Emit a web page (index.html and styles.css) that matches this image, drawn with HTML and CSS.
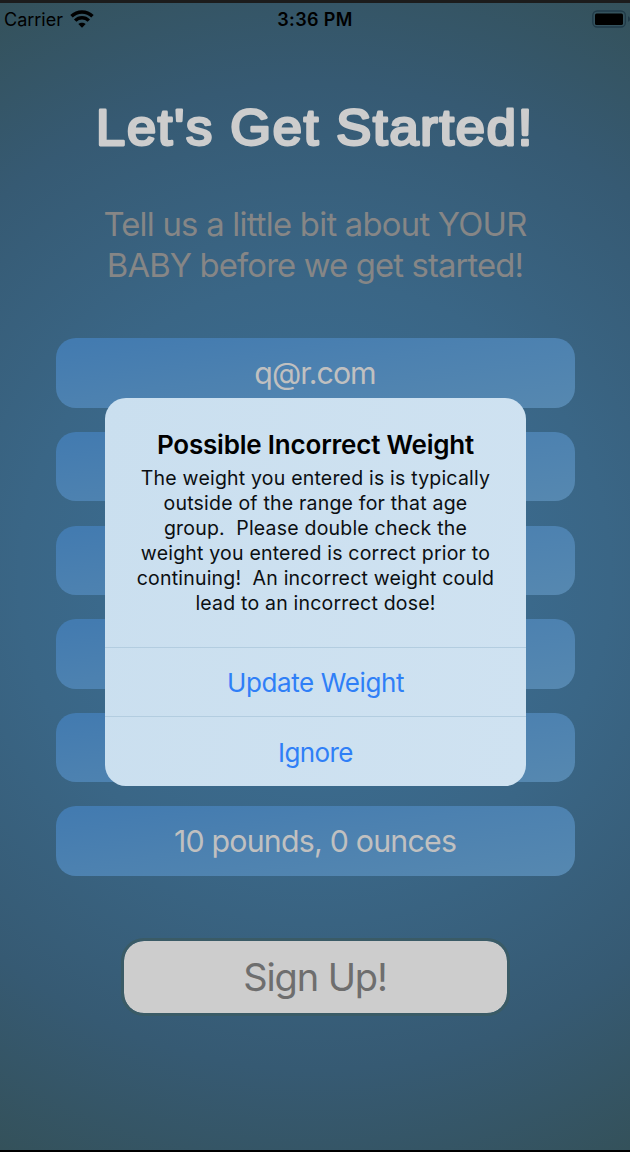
FILE: index.html
```html
<!DOCTYPE html>
<html lang="en">
<head>
<meta charset="utf-8">
<title>Let's Get Started!</title>
<link rel="stylesheet" href="styles.css">
</head>
<body>
<div class="screen">
  <header class="status">
    <div class="status-left">
      <span class="carrier">Carrier</span>
      <svg class="wifi" width="24" height="18" viewBox="0 0 24 18" fill="none" stroke="#000" stroke-width="3.4">
        <path d="M1.5 6.3C7.3.5 16.7.5 22.500 6.3"/>
        <path d="M5.2 10.6c3.8-3.9 9.8-3.9 13.6 0"/>
        <path d="M12 17.8 8.3 14.100c2.1-1.9 5.3-1.9 7.4 0z" fill="#000" stroke="none"/>
      </svg>
    </div>
    <span class="time">3:36 PM</span>
    <svg class="battery" width="38" height="18" viewBox="0 0 38 18">
      <rect x="0.800" y="1" width="32.600" height="16" rx="4.500" fill="none" stroke="#213b49" stroke-width="1.3"/>
      <rect x="3" y="3.600" width="28" height="11.400" rx="1.6" fill="#000"/>
      <path d="M36 6.2c1.300.5 2 1.500 2 2.800s-.7 2.300-2 2.800z" fill="#213b49"/>
    </svg>
  </header>
  <main class="content">
    <h1 class="heading">
      <svg width="460" height="60" viewBox="0 0 460 60">
        <text class="heading-text" x="11" y="47.500" textLength="438" lengthAdjust="spacingAndGlyphs">Let's Get Started!</text>
      </svg>
    </h1>
    <p class="subtitle"><span class="sub-a">Tell us a little bit about YOUR</span><br><span class="sub-b">BABY before we get started!</span></p>
    <div class="fields">
      <div class="field email">q@r.com</div>
      <div class="field"></div>
      <div class="field"></div>
      <div class="field"></div>
      <div class="field"></div>
      <div class="field weight">10 pounds, 0 ounces</div>
    </div>
    <button class="signup">Sign Up!</button>
  </main>
  <div class="alert" role="alertdialog">
    <div class="alert-text">
      <h2 class="alert-title">Possible Incorrect Weight</h2>
      <p class="alert-body">The weight you entered is is typically
outside of the range for that age
group.  Please double check the
weight you entered is correct prior to
continuing!  An incorrect weight could
lead to an incorrect dose!</p>
    </div>
    <button class="action update">Update Weight</button>
    <button class="action ignore">Ignore</button>
  </div>
</div>
</body>
</html>
```
FILE: styles.css
```css
* { box-sizing: border-box; }

body {
  margin: 0;
  background: #000;
  font-family: Inter, "Liberation Sans", sans-serif;
}

button {
  font-family: inherit;
  padding: 0;
}

.screen {
  position: relative;
  height: 1152px;
  border-top: 3px solid #1c1c1c;
  border-bottom: 2px solid #000;
  background: radial-gradient(circle 657px at 315px 574px, #3c7199 0%, #3a6686 45%, #365a73 75%, #34515a 100%);
  overflow: hidden;
}

.status {
  display: grid;
  grid-template-columns: 1fr auto 1fr;
  align-items: center;
  height: 32px;
  padding-left: 4px;
  color: #000;
}

.status-left {
  display: flex;
  align-items: center;
  gap: 7px;
}

.carrier { font-size: 18px; }
.wifi { margin-top: -1px; }
.time { margin-left: -4px; font-size: 18px; font-weight: 600; letter-spacing: 0.4px; }
.battery { justify-self: end; }

.content {
  display: flex;
  flex-direction: column;
  align-items: center;
}

.heading {
  height: 60px;
  margin: 62px 0 0;
}

.heading svg { display: block; }

.heading-text {
  font: 400 50px "Liberation Sans", Arial, sans-serif;
  letter-spacing: 1.700px;
  fill: #cdcdcd;
  stroke: #cdcdcd;
  stroke-width: 2.800px;
  stroke-linejoin: round;
}

.subtitle {
  margin: 46.600px 0 0;
  font-size: 32.800px;
  line-height: 41px;
  text-align: center;
  white-space: nowrap;
  color: #868686;
}

.sub-a { letter-spacing: -0.75px; }
.sub-b { letter-spacing: -0.86px; }

.fields {
  display: grid;
  grid-auto-rows: 69.4px;
  row-gap: 24.2px;
  width: 519px;
  margin-top: 52.800px;
}

.field {
  display: flex;
  align-items: center;
  justify-content: center;
  border-radius: 20px;
  background: linear-gradient(172deg, #437bb0 5%, #4c81b0 45%, #5688b0 100%);
  color: #c0c0c0;
  font-size: 30.300px;
}

.email { letter-spacing: -0.95px; }
.weight { letter-spacing: -0.77px; }

.signup {
  width: 389px;
  height: 78px;
  margin-top: 62.600px;
  border: 3px solid #3a5b66;
  border-radius: 23px;
  background: #cdcdcd;
  background-clip: padding-box;
  color: #6e6e6e;
  font-size: 38px;
  letter-spacing: -1.1px;
}

.alert {
  position: absolute;
  top: 395.400px;
  left: 105px;
  width: 421px;
  height: 387.600px;
  display: grid;
  grid-template-rows: 249px 69px 1fr;
  border-radius: 21px;
  overflow: hidden;
  background: linear-gradient(100deg, #cadfef, #cfe2f1);
  text-align: center;
}

.alert-text { padding-top: 30px; }

.alert-title {
  margin: 0;
  font-size: 26px;
  font-weight: 600;
  line-height: 34px;
  letter-spacing: -0.2px;
  color: #000;
}

.alert-body {
  margin: 4px 0 0;
  font-size: 19.500px;
  line-height: 25px;
  letter-spacing: 0.2px;
  white-space: pre;
  color: #0b0f12;
}

.action {
  border: 0;
  border-top: 1.500px solid #b3cde0;
  background: none;
  color: #2f7ff7;
  font-size: 26px;
  padding-top: 1px;
}

.update { letter-spacing: -0.38px; }
.ignore { letter-spacing: -0.6px; }
```
